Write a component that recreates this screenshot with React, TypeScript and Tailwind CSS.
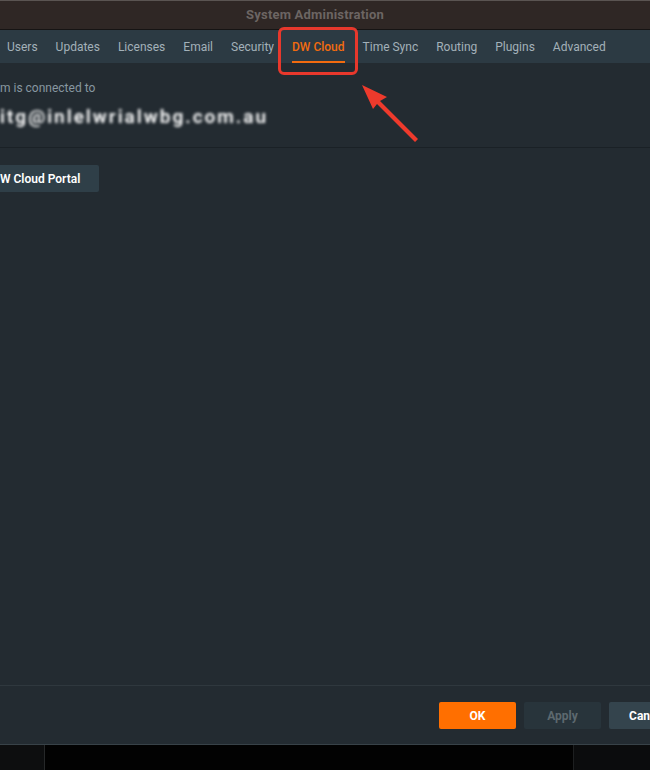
import React from "react";

const tabs = ["Users", "Updates", "Licenses", "Email", "Security", "DW Cloud", "Time Sync", "Routing", "Plugins", "Advanced"];

export default function App() {
  return (
    <div className="relative w-[650px] h-[770px] overflow-hidden flex flex-col bg-black" style={{ fontFamily: "Roboto, 'Noto Sans', sans-serif" }}>
      {/* Title bar */}
      <div className="h-[30px] shrink-0 bg-[#2f2725] border-t border-[#5a5452] border-b border-b-[#161414] flex items-center justify-center pr-[20px]">
        <span className="text-[13px] font-bold text-[#6c6563] tracking-[0.2px]">System Administration</span>
      </div>
      {/* Tab bar */}
      <div className="h-[33px] shrink-0 bg-[#2c3a43] flex items-stretch pl-[7px] gap-[18px]">
        {tabs.map((t) => (
          <div key={t} className={`relative flex items-center text-[12px] whitespace-nowrap ${t === "DW Cloud" ? "text-[#f26b0f] font-medium" : "text-[#a3b1b9]"}`}>
            {t}
            {t === "DW Cloud" && <div className="absolute left-0 right-0 bottom-[0px] h-[2px] bg-[#f26b0f]" />}
          </div>
        ))}
      </div>
      {/* Content */}
      <div className="flex-1 bg-[#232b31] flex flex-col">
        <div className="pt-[16px] pb-[19px] border-b border-[#1a2126]">
          <div className="text-[12px] text-[#8797a0] leading-[18px]">m is connected to</div>
          <div className="mt-[9px] text-[19px] leading-[22px] font-semibold text-white blur-[1.4px] whitespace-nowrap tracking-[2px]">itg@inlelwrialwbg.com.au</div>
        </div>
        <div className="pt-[17px]">
          <button className="h-[27px] w-[99px] bg-[#2f3f48] rounded-r-[2px] text-white text-[12px] font-semibold pl-[0px] text-left">W Cloud Portal</button>
        </div>
      </div>
      {/* Footer */}
      <div className="h-[60px] shrink-0 bg-[#232b31] border-t border-[#2f383e] border-b border-b-[#384248] flex items-center justify-end gap-[8px] pt-[1px]">
        <button className="h-[27px] w-[77px] shrink-0 rounded-[2px] bg-[#ff6f00] text-white text-[12px] font-bold">OK</button>
        <button className="h-[27px] w-[77px] shrink-0 rounded-[2px] bg-[#28343b] text-[#5d696f] text-[12px] font-bold">Apply</button>
        <button className="h-[27px] w-[77px] shrink-0 mr-[-36px] rounded-[2px] bg-[#34444d] text-white text-[12px] font-bold">Cancel</button>
      </div>
      {/* Bottom strip */}
      <div className="h-[25px] shrink-0 flex bg-[#020202]">
        <div className="w-[45px] bg-[#0d0e0f] border-r border-[#262829]" />
        <div className="flex-1" />
        <div className="w-[77px] bg-[#0b0c0d] border-l border-[#1d1f20]" />
      </div>

      {/* Annotation overlays */}
      <div className="absolute left-[278px] top-[27px] w-[80px] h-[48px] border-[3px] border-[#e8382c] rounded-[6px]" />
      <svg className="absolute left-0 top-0" width="650" height="770" viewBox="0 0 650 770">
        <polygon points="362,85 387,97 380,101 418,139 415,142 377,104 373,109" fill="#ee3a2c" />
      </svg>
    </div>
  );
}
